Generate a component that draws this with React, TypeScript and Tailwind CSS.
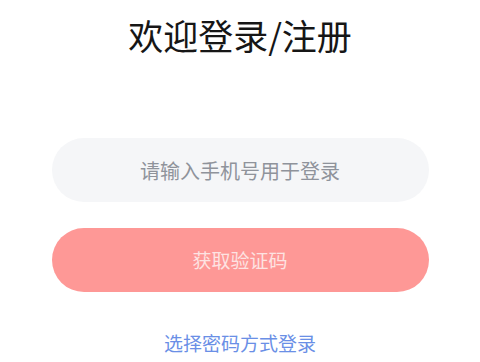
export default function App() {
  return (
    <div
      className="flex h-[362px] w-[480px] flex-col items-center bg-white"
      style={{ fontFamily: '"Noto Sans CJK SC", "Noto Sans", sans-serif' }}
    >
      <h1 className="mt-[11px] text-[35px] leading-[47px] text-[#161616]">欢迎登录/注册</h1>

      <input
        type="tel"
        placeholder="请输入手机号用于登录"
        className="mt-[80px] h-[64px] w-[377px] rounded-full bg-[#f5f6f8] text-center text-[20px] text-gray-800 outline-none placeholder:text-[#8f939b]"
      />

      <button
        type="button"
        className="mt-[26px] h-[64px] w-[377px] rounded-full bg-[#fe9896] text-[19px] text-[#fde3e2]"
      >
        获取验证码
      </button>

      <a href="#" className="mt-[38px] text-[19px] leading-[26px] text-[#6a8fe6]">
        选择密码方式登录
      </a>
    </div>
  )
}
